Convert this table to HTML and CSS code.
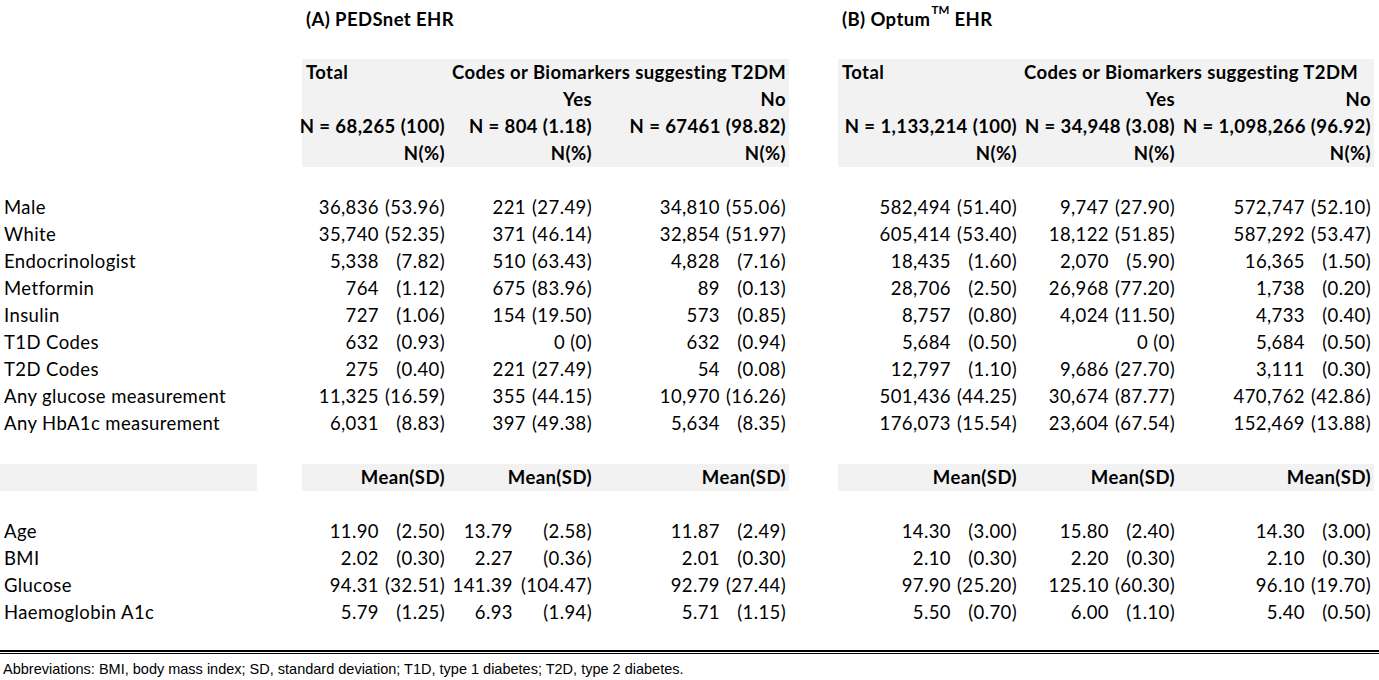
FILE: index.html
```html
<!DOCTYPE html>
<html>
<head>
<meta charset="utf-8">
<link rel="stylesheet" href="styles.css">
</head>
<body>
<div class="sheet">
  <!-- title row -->
  <div class="c"></div><div class="c"></div>
  <div class="c title s3">(A) PEDSnet EHR</div>
  <div class="c"></div>
  <div class="c title s3">(B) Optum<sup>TM</sup>&nbsp;EHR</div>
  <div class="c full"></div>

  <!-- header rows -->
  <div class="c"></div><div class="c"></div>
  <div class="c g b">Total</div><div class="c g b s2">Codes or Biomarkers suggesting T2DM</div>
  <div class="c"></div>
  <div class="c g b">Total</div><div class="c g b s2">Codes or Biomarkers suggesting T2DM</div>

  <div class="c"></div><div class="c"></div>
  <div class="c g"></div><div class="c g b r">Yes</div><div class="c g b r">No</div>
  <div class="c"></div>
  <div class="c g"></div><div class="c g b r">Yes</div><div class="c g b r">No</div>

  <div class="c"></div><div class="c"></div>
  <div class="c g b r">N = 68,265 (100)</div><div class="c g b r">N = 804 (1.18)</div><div class="c g b r">N = 67461 (98.82)</div>
  <div class="c"></div>
  <div class="c g b r">N = 1,133,214 (100)</div><div class="c g b r">N = 34,948 (3.08)</div><div class="c g b r">N = 1,098,266 (96.92)</div>

  <div class="c"></div><div class="c"></div>
  <div class="c g b r">N(%)</div><div class="c g b r">N(%)</div><div class="c g b r">N(%)</div>
  <div class="c"></div>
  <div class="c g b r">N(%)</div><div class="c g b r">N(%)</div><div class="c g b r">N(%)</div>
  <div class="c full"></div>

  <!-- counts -->
  <div class="c">Male</div><div class="c"></div>
  <div class="c r"><span>36,836</span><span class="p">(53.96)</span></div>
  <div class="c r"><span>221</span><span class="p">(27.49)</span></div>
  <div class="c r"><span>34,810</span><span class="p">(55.06)</span></div>
  <div class="c"></div>
  <div class="c r"><span>582,494</span><span class="p">(51.40)</span></div>
  <div class="c r"><span>9,747</span><span class="p">(27.90)</span></div>
  <div class="c r"><span>572,747</span><span class="p">(52.10)</span></div>

  <div class="c">White</div><div class="c"></div>
  <div class="c r"><span>35,740</span><span class="p">(52.35)</span></div>
  <div class="c r"><span>371</span><span class="p">(46.14)</span></div>
  <div class="c r"><span>32,854</span><span class="p">(51.97)</span></div>
  <div class="c"></div>
  <div class="c r"><span>605,414</span><span class="p">(53.40)</span></div>
  <div class="c r"><span>18,122</span><span class="p">(51.85)</span></div>
  <div class="c r"><span>587,292</span><span class="p">(53.47)</span></div>

  <div class="c">Endocrinologist</div><div class="c"></div>
  <div class="c r"><span>5,338</span><span class="p">(7.82)</span></div>
  <div class="c r"><span>510</span><span class="p">(63.43)</span></div>
  <div class="c r"><span>4,828</span><span class="p">(7.16)</span></div>
  <div class="c"></div>
  <div class="c r"><span>18,435</span><span class="p">(1.60)</span></div>
  <div class="c r"><span>2,070</span><span class="p">(5.90)</span></div>
  <div class="c r"><span>16,365</span><span class="p">(1.50)</span></div>

  <div class="c">Metformin</div><div class="c"></div>
  <div class="c r"><span>764</span><span class="p">(1.12)</span></div>
  <div class="c r"><span>675</span><span class="p">(83.96)</span></div>
  <div class="c r"><span>89</span><span class="p">(0.13)</span></div>
  <div class="c"></div>
  <div class="c r"><span>28,706</span><span class="p">(2.50)</span></div>
  <div class="c r"><span>26,968</span><span class="p">(77.20)</span></div>
  <div class="c r"><span>1,738</span><span class="p">(0.20)</span></div>

  <div class="c">Insulin</div><div class="c"></div>
  <div class="c r"><span>727</span><span class="p">(1.06)</span></div>
  <div class="c r"><span>154</span><span class="p">(19.50)</span></div>
  <div class="c r"><span>573</span><span class="p">(0.85)</span></div>
  <div class="c"></div>
  <div class="c r"><span>8,757</span><span class="p">(0.80)</span></div>
  <div class="c r"><span>4,024</span><span class="p">(11.50)</span></div>
  <div class="c r"><span>4,733</span><span class="p">(0.40)</span></div>

  <div class="c">T1D Codes</div><div class="c"></div>
  <div class="c r"><span>632</span><span class="p">(0.93)</span></div>
  <div class="c r">0 (0)</div>
  <div class="c r"><span>632</span><span class="p">(0.94)</span></div>
  <div class="c"></div>
  <div class="c r"><span>5,684</span><span class="p">(0.50)</span></div>
  <div class="c r">0 (0)</div>
  <div class="c r"><span>5,684</span><span class="p">(0.50)</span></div>

  <div class="c">T2D Codes</div><div class="c"></div>
  <div class="c r"><span>275</span><span class="p">(0.40)</span></div>
  <div class="c r"><span>221</span><span class="p">(27.49)</span></div>
  <div class="c r"><span>54</span><span class="p">(0.08)</span></div>
  <div class="c"></div>
  <div class="c r"><span>12,797</span><span class="p">(1.10)</span></div>
  <div class="c r"><span>9,686</span><span class="p">(27.70)</span></div>
  <div class="c r"><span>3,111</span><span class="p">(0.30)</span></div>

  <div class="c">Any glucose measurement</div><div class="c"></div>
  <div class="c r"><span>11,325</span><span class="p">(16.59)</span></div>
  <div class="c r"><span>355</span><span class="p">(44.15)</span></div>
  <div class="c r"><span>10,970</span><span class="p">(16.26)</span></div>
  <div class="c"></div>
  <div class="c r"><span>501,436</span><span class="p">(44.25)</span></div>
  <div class="c r"><span>30,674</span><span class="p">(87.77)</span></div>
  <div class="c r"><span>470,762</span><span class="p">(42.86)</span></div>

  <div class="c">Any HbA1c measurement</div><div class="c"></div>
  <div class="c r"><span>6,031</span><span class="p">(8.83)</span></div>
  <div class="c r"><span>397</span><span class="p">(49.38)</span></div>
  <div class="c r"><span>5,634</span><span class="p">(8.35)</span></div>
  <div class="c"></div>
  <div class="c r"><span>176,073</span><span class="p">(15.54)</span></div>
  <div class="c r"><span>23,604</span><span class="p">(67.54)</span></div>
  <div class="c r"><span>152,469</span><span class="p">(13.88)</span></div>

  <div class="c full"></div>

  <!-- mean header -->
  <div class="c g"></div><div class="c"></div>
  <div class="c g b r">Mean(SD)</div><div class="c g b r">Mean(SD)</div><div class="c g b r">Mean(SD)</div>
  <div class="c"></div>
  <div class="c g b r">Mean(SD)</div><div class="c g b r">Mean(SD)</div><div class="c g b r">Mean(SD)</div>
  <div class="c full"></div>

  <!-- means -->
  <div class="c">Age</div><div class="c"></div>
  <div class="c r"><span>11.90</span><span class="p">(2.50)</span></div>
  <div class="c r"><span>13.79</span><span class="p w">(2.58)</span></div>
  <div class="c r"><span>11.87</span><span class="p">(2.49)</span></div>
  <div class="c"></div>
  <div class="c r"><span>14.30</span><span class="p">(3.00)</span></div>
  <div class="c r"><span>15.80</span><span class="p">(2.40)</span></div>
  <div class="c r"><span>14.30</span><span class="p">(3.00)</span></div>

  <div class="c">BMI</div><div class="c"></div>
  <div class="c r"><span>2.02</span><span class="p">(0.30)</span></div>
  <div class="c r"><span>2.27</span><span class="p w">(0.36)</span></div>
  <div class="c r"><span>2.01</span><span class="p">(0.30)</span></div>
  <div class="c"></div>
  <div class="c r"><span>2.10</span><span class="p">(0.30)</span></div>
  <div class="c r"><span>2.20</span><span class="p">(0.30)</span></div>
  <div class="c r"><span>2.10</span><span class="p">(0.30)</span></div>

  <div class="c">Glucose</div><div class="c"></div>
  <div class="c r"><span>94.31</span><span class="p">(32.51)</span></div>
  <div class="c r"><span>141.39</span><span class="p w">(104.47)</span></div>
  <div class="c r"><span>92.79</span><span class="p">(27.44)</span></div>
  <div class="c"></div>
  <div class="c r"><span>97.90</span><span class="p">(25.20)</span></div>
  <div class="c r"><span>125.10</span><span class="p">(60.30)</span></div>
  <div class="c r"><span>96.10</span><span class="p">(19.70)</span></div>

  <div class="c">Haemoglobin A1c</div><div class="c"></div>
  <div class="c r"><span>5.79</span><span class="p">(1.25)</span></div>
  <div class="c r"><span>6.93</span><span class="p w">(1.94)</span></div>
  <div class="c r"><span>5.71</span><span class="p">(1.15)</span></div>
  <div class="c"></div>
  <div class="c r"><span>5.50</span><span class="p">(0.70)</span></div>
  <div class="c r"><span>6.00</span><span class="p">(1.10)</span></div>
  <div class="c r"><span>5.40</span><span class="p">(0.50)</span></div>
  <div class="c full"></div>
</div>
<div class="rule"></div>
<p class="note">Abbreviations: BMI, body mass index; SD, standard deviation; T1D, type 1 diabetes; T2D, type 2 diabetes.</p>
</body>
</html>
```
FILE: styles.css
```css
html, body {
  margin: 0;
  padding: 0;
  background: #ffffff;
}

body {
  width: 1379px;
  font-family: Lato, "Open Sans", sans-serif;
  color: #000000;
}

.sheet {
  display: grid;
  grid-template-columns: 257px 45px 146px 147px 194px 49px 182px 158px 196px;
  grid-template-rows: 32px;
  grid-auto-rows: 27px;
  font-size: 18.5px;
  letter-spacing: 0.4px;
}

.c {
  display: flex;
  align-items: center;
  padding: 0 3px 0 4px;
  white-space: nowrap;
  line-height: 27px;
  min-width: 0;
}

.full {
  grid-column: 1 / -1;
}

.s2 {
  grid-column: span 2;
}

.s3 {
  grid-column: span 3;
}

.r {
  justify-content: flex-end;
}

.g {
  background: #f2f2f2;
}

.b {
  font-weight: 700;
}

.title {
  font-weight: 700;
  padding-top: 6px;
}

.title sup {
  font-size: 11.5px;
  line-height: 0;
  vertical-align: 0;
  position: relative;
  top: -9px;
  letter-spacing: 0.2px;
  margin-left: 1px;
}

.p {
  flex: none;
  width: 66px;
  text-align: right;
}

.p.w {
  width: 79px;
}

.rule {
  width: 1379px;
  height: 1px;
  margin-top: -3px;
  border-top: 2px solid #000000;
  border-bottom: 1px solid #000000;
}

.note {
  margin: 7px 0 0 3px;
  font-family: "Liberation Sans", Arial, sans-serif;
  font-size: 14.5px;
  line-height: 16px;
  color: #000000;
}
```
